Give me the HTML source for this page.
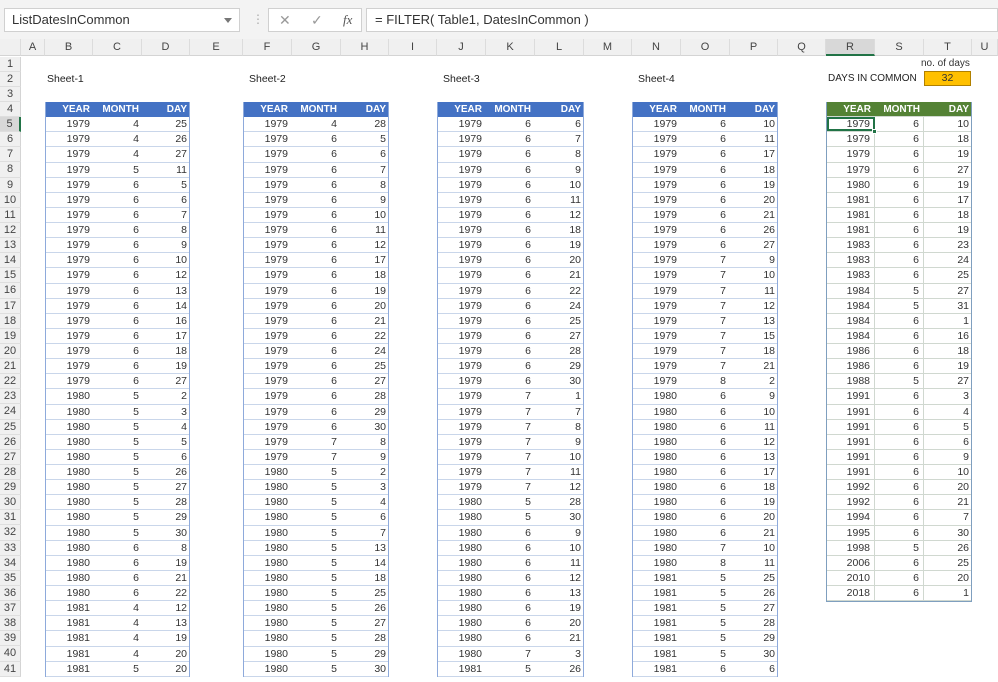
<!DOCTYPE html>
<html><head><meta charset="utf-8"><style>
*{box-sizing:border-box;margin:0;padding:0}
body{width:998px;height:682px;overflow:hidden;background:#fff;font-family:"Liberation Sans",sans-serif;font-size:10.5px;color:#333;position:relative}
.top{position:absolute;left:0;top:0;width:998px;height:39px;background:#f3f3f3}
.nb{position:absolute;left:4px;top:8px;width:236px;height:24px;background:#fff;border:1px solid #d0d0d0;font-size:13px;line-height:22px;padding-left:7px;color:#333}
.nb:after{content:"";position:absolute;right:7px;top:9px;border:4px solid transparent;border-top:5px solid #777}
.fb{position:absolute;left:268px;top:8px;width:94px;height:24px;background:#fff;border:1px solid #d0d0d0;color:#999;font-size:14px;line-height:22px}
.fx{position:absolute;left:366px;top:8px;width:632px;height:24px;background:#fff;border:1px solid #d0d0d0;font-size:13px;line-height:22px;padding-left:8px;color:#333}
.ch{position:absolute;top:39px;height:17px;background:#f0f0f0;border-bottom:1px solid #d4d4d4;border-right:1px solid #dcdcdc;text-align:center;font-size:11px;line-height:16px;color:#444}
.rh{position:relative;width:21px;height:15.13px;background:#f0f0f0;border-bottom:1px solid #dedede;border-right:1px solid #d4d4d4;text-align:center;font-size:11px;line-height:15px;color:#444}
.lbl{position:absolute;font-size:10.5px;color:#222}
.t{position:absolute;border-left:1px solid #8eaadb;border-right:1px solid #8eaadb}
.t .r{display:flex;height:15.13px;line-height:15px;border-bottom:1px solid #c9d6ea}
.t .r span{display:block;text-align:right;padding-right:4px}
.t .r span:nth-child(1){width:48px}
.t .r span:nth-child(2){width:49px}
.t .r span:nth-child(3){flex:1;padding-right:2px}
.t .h{background:#4472c4;color:#fff;font-weight:bold;border-bottom:none;font-size:10px}
.g{border-left:1px solid #7f9fbf;border-right:1px solid #7f9fbf;border-bottom:1px solid #7f9fbf}
.g .r{border-bottom:1px solid #d0d8d0}
.g .r span:nth-child(1),.g .r span:nth-child(2){border-right:1px solid #d0d8d0}
.g .h{background:#548235}
.g .h span{border-right:none!important}
</style></head><body>
<div class="top">
<div class="nb">ListDatesInCommon</div>
<div style="position:absolute;left:252px;top:12px;color:#aaa;font-size:12px">⋮</div>
<div class="fb"><span style="position:absolute;left:10px">✕</span><span style="position:absolute;left:42px">✓</span><span style="position:absolute;left:74px;font-family:'Liberation Serif',serif;font-style:italic;color:#555;font-size:13px">fx</span></div>
<div class="fx">= FILTER( Table1, DatesInCommon )</div>
</div>
<div class="ch" style="left:0;width:21px"></div>
<div class="ch" style="left:21px;width:24px">A</div>
<div class="ch" style="left:45px;width:48px">B</div>
<div class="ch" style="left:93px;width:49px">C</div>
<div class="ch" style="left:142px;width:48px">D</div>
<div class="ch" style="left:190px;width:53px">E</div>
<div class="ch" style="left:243px;width:49px">F</div>
<div class="ch" style="left:292px;width:49px">G</div>
<div class="ch" style="left:341px;width:48px">H</div>
<div class="ch" style="left:389px;width:48px">I</div>
<div class="ch" style="left:437px;width:49px">J</div>
<div class="ch" style="left:486px;width:49px">K</div>
<div class="ch" style="left:535px;width:49px">L</div>
<div class="ch" style="left:584px;width:48px">M</div>
<div class="ch" style="left:632px;width:49px">N</div>
<div class="ch" style="left:681px;width:49px">O</div>
<div class="ch" style="left:730px;width:48px">P</div>
<div class="ch" style="left:778px;width:48px">Q</div>
<div class="ch" style="left:826px;width:49px;background:#d8d8d8;border-bottom:2px solid #217346">R</div>
<div class="ch" style="left:875px;width:49px">S</div>
<div class="ch" style="left:924px;width:48px">T</div>
<div class="ch" style="left:972px;width:26px">U</div>

<div style="position:absolute;left:0;top:56.6px">
<div class="rh">1</div><div class="rh">2</div><div class="rh">3</div><div class="rh">4</div><div class="rh" style="background:#d8d8d8;border-right:2px solid #217346">5</div><div class="rh">6</div><div class="rh">7</div><div class="rh">8</div><div class="rh">9</div><div class="rh">10</div><div class="rh">11</div><div class="rh">12</div><div class="rh">13</div><div class="rh">14</div><div class="rh">15</div><div class="rh">16</div><div class="rh">17</div><div class="rh">18</div><div class="rh">19</div><div class="rh">20</div><div class="rh">21</div><div class="rh">22</div><div class="rh">23</div><div class="rh">24</div><div class="rh">25</div><div class="rh">26</div><div class="rh">27</div><div class="rh">28</div><div class="rh">29</div><div class="rh">30</div><div class="rh">31</div><div class="rh">32</div><div class="rh">33</div><div class="rh">34</div><div class="rh">35</div><div class="rh">36</div><div class="rh">37</div><div class="rh">38</div><div class="rh">39</div><div class="rh">40</div><div class="rh">41</div>
</div>

<div class="lbl" style="left:47px;top:73px">Sheet-1</div>
<div class="lbl" style="left:249px;top:73px">Sheet-2</div>
<div class="lbl" style="left:443px;top:73px">Sheet-3</div>
<div class="lbl" style="left:638px;top:73px">Sheet-4</div>
<div class="lbl" style="left:828px;top:73px;font-size:10px">DAYS IN COMMON</div>
<div class="lbl" style="left:921px;top:58px;font-size:10px;color:#333">no. of days</div>
<div style="position:absolute;left:924px;top:71px;width:47px;height:15px;background:#ffc000;border:1px solid #b08000;text-align:center;line-height:13px">32</div>

<div class="t" style="left:45px;top:102px;width:145px">
<div class="r h"><span>YEAR</span><span>MONTH</span><span>DAY</span></div>
<div class="r"><span>1979</span><span>4</span><span>25</span></div>
<div class="r"><span>1979</span><span>4</span><span>26</span></div>
<div class="r"><span>1979</span><span>4</span><span>27</span></div>
<div class="r"><span>1979</span><span>5</span><span>11</span></div>
<div class="r"><span>1979</span><span>6</span><span>5</span></div>
<div class="r"><span>1979</span><span>6</span><span>6</span></div>
<div class="r"><span>1979</span><span>6</span><span>7</span></div>
<div class="r"><span>1979</span><span>6</span><span>8</span></div>
<div class="r"><span>1979</span><span>6</span><span>9</span></div>
<div class="r"><span>1979</span><span>6</span><span>10</span></div>
<div class="r"><span>1979</span><span>6</span><span>12</span></div>
<div class="r"><span>1979</span><span>6</span><span>13</span></div>
<div class="r"><span>1979</span><span>6</span><span>14</span></div>
<div class="r"><span>1979</span><span>6</span><span>16</span></div>
<div class="r"><span>1979</span><span>6</span><span>17</span></div>
<div class="r"><span>1979</span><span>6</span><span>18</span></div>
<div class="r"><span>1979</span><span>6</span><span>19</span></div>
<div class="r"><span>1979</span><span>6</span><span>27</span></div>
<div class="r"><span>1980</span><span>5</span><span>2</span></div>
<div class="r"><span>1980</span><span>5</span><span>3</span></div>
<div class="r"><span>1980</span><span>5</span><span>4</span></div>
<div class="r"><span>1980</span><span>5</span><span>5</span></div>
<div class="r"><span>1980</span><span>5</span><span>6</span></div>
<div class="r"><span>1980</span><span>5</span><span>26</span></div>
<div class="r"><span>1980</span><span>5</span><span>27</span></div>
<div class="r"><span>1980</span><span>5</span><span>28</span></div>
<div class="r"><span>1980</span><span>5</span><span>29</span></div>
<div class="r"><span>1980</span><span>5</span><span>30</span></div>
<div class="r"><span>1980</span><span>6</span><span>8</span></div>
<div class="r"><span>1980</span><span>6</span><span>19</span></div>
<div class="r"><span>1980</span><span>6</span><span>21</span></div>
<div class="r"><span>1980</span><span>6</span><span>22</span></div>
<div class="r"><span>1981</span><span>4</span><span>12</span></div>
<div class="r"><span>1981</span><span>4</span><span>13</span></div>
<div class="r"><span>1981</span><span>4</span><span>19</span></div>
<div class="r"><span>1981</span><span>4</span><span>20</span></div>
<div class="r"><span>1981</span><span>5</span><span>20</span></div>
</div>

<div class="t" style="left:243px;top:102px;width:146px">
<div class="r h"><span>YEAR</span><span>MONTH</span><span>DAY</span></div>
<div class="r"><span>1979</span><span>4</span><span>28</span></div>
<div class="r"><span>1979</span><span>6</span><span>5</span></div>
<div class="r"><span>1979</span><span>6</span><span>6</span></div>
<div class="r"><span>1979</span><span>6</span><span>7</span></div>
<div class="r"><span>1979</span><span>6</span><span>8</span></div>
<div class="r"><span>1979</span><span>6</span><span>9</span></div>
<div class="r"><span>1979</span><span>6</span><span>10</span></div>
<div class="r"><span>1979</span><span>6</span><span>11</span></div>
<div class="r"><span>1979</span><span>6</span><span>12</span></div>
<div class="r"><span>1979</span><span>6</span><span>17</span></div>
<div class="r"><span>1979</span><span>6</span><span>18</span></div>
<div class="r"><span>1979</span><span>6</span><span>19</span></div>
<div class="r"><span>1979</span><span>6</span><span>20</span></div>
<div class="r"><span>1979</span><span>6</span><span>21</span></div>
<div class="r"><span>1979</span><span>6</span><span>22</span></div>
<div class="r"><span>1979</span><span>6</span><span>24</span></div>
<div class="r"><span>1979</span><span>6</span><span>25</span></div>
<div class="r"><span>1979</span><span>6</span><span>27</span></div>
<div class="r"><span>1979</span><span>6</span><span>28</span></div>
<div class="r"><span>1979</span><span>6</span><span>29</span></div>
<div class="r"><span>1979</span><span>6</span><span>30</span></div>
<div class="r"><span>1979</span><span>7</span><span>8</span></div>
<div class="r"><span>1979</span><span>7</span><span>9</span></div>
<div class="r"><span>1980</span><span>5</span><span>2</span></div>
<div class="r"><span>1980</span><span>5</span><span>3</span></div>
<div class="r"><span>1980</span><span>5</span><span>4</span></div>
<div class="r"><span>1980</span><span>5</span><span>6</span></div>
<div class="r"><span>1980</span><span>5</span><span>7</span></div>
<div class="r"><span>1980</span><span>5</span><span>13</span></div>
<div class="r"><span>1980</span><span>5</span><span>14</span></div>
<div class="r"><span>1980</span><span>5</span><span>18</span></div>
<div class="r"><span>1980</span><span>5</span><span>25</span></div>
<div class="r"><span>1980</span><span>5</span><span>26</span></div>
<div class="r"><span>1980</span><span>5</span><span>27</span></div>
<div class="r"><span>1980</span><span>5</span><span>28</span></div>
<div class="r"><span>1980</span><span>5</span><span>29</span></div>
<div class="r"><span>1980</span><span>5</span><span>30</span></div>
</div>

<div class="t" style="left:437px;top:102px;width:147px">
<div class="r h"><span>YEAR</span><span>MONTH</span><span>DAY</span></div>
<div class="r"><span>1979</span><span>6</span><span>6</span></div>
<div class="r"><span>1979</span><span>6</span><span>7</span></div>
<div class="r"><span>1979</span><span>6</span><span>8</span></div>
<div class="r"><span>1979</span><span>6</span><span>9</span></div>
<div class="r"><span>1979</span><span>6</span><span>10</span></div>
<div class="r"><span>1979</span><span>6</span><span>11</span></div>
<div class="r"><span>1979</span><span>6</span><span>12</span></div>
<div class="r"><span>1979</span><span>6</span><span>18</span></div>
<div class="r"><span>1979</span><span>6</span><span>19</span></div>
<div class="r"><span>1979</span><span>6</span><span>20</span></div>
<div class="r"><span>1979</span><span>6</span><span>21</span></div>
<div class="r"><span>1979</span><span>6</span><span>22</span></div>
<div class="r"><span>1979</span><span>6</span><span>24</span></div>
<div class="r"><span>1979</span><span>6</span><span>25</span></div>
<div class="r"><span>1979</span><span>6</span><span>27</span></div>
<div class="r"><span>1979</span><span>6</span><span>28</span></div>
<div class="r"><span>1979</span><span>6</span><span>29</span></div>
<div class="r"><span>1979</span><span>6</span><span>30</span></div>
<div class="r"><span>1979</span><span>7</span><span>1</span></div>
<div class="r"><span>1979</span><span>7</span><span>7</span></div>
<div class="r"><span>1979</span><span>7</span><span>8</span></div>
<div class="r"><span>1979</span><span>7</span><span>9</span></div>
<div class="r"><span>1979</span><span>7</span><span>10</span></div>
<div class="r"><span>1979</span><span>7</span><span>11</span></div>
<div class="r"><span>1979</span><span>7</span><span>12</span></div>
<div class="r"><span>1980</span><span>5</span><span>28</span></div>
<div class="r"><span>1980</span><span>5</span><span>30</span></div>
<div class="r"><span>1980</span><span>6</span><span>9</span></div>
<div class="r"><span>1980</span><span>6</span><span>10</span></div>
<div class="r"><span>1980</span><span>6</span><span>11</span></div>
<div class="r"><span>1980</span><span>6</span><span>12</span></div>
<div class="r"><span>1980</span><span>6</span><span>13</span></div>
<div class="r"><span>1980</span><span>6</span><span>19</span></div>
<div class="r"><span>1980</span><span>6</span><span>20</span></div>
<div class="r"><span>1980</span><span>6</span><span>21</span></div>
<div class="r"><span>1980</span><span>7</span><span>3</span></div>
<div class="r"><span>1981</span><span>5</span><span>26</span></div>
</div>

<div class="t" style="left:632px;top:102px;width:146px">
<div class="r h"><span>YEAR</span><span>MONTH</span><span>DAY</span></div>
<div class="r"><span>1979</span><span>6</span><span>10</span></div>
<div class="r"><span>1979</span><span>6</span><span>11</span></div>
<div class="r"><span>1979</span><span>6</span><span>17</span></div>
<div class="r"><span>1979</span><span>6</span><span>18</span></div>
<div class="r"><span>1979</span><span>6</span><span>19</span></div>
<div class="r"><span>1979</span><span>6</span><span>20</span></div>
<div class="r"><span>1979</span><span>6</span><span>21</span></div>
<div class="r"><span>1979</span><span>6</span><span>26</span></div>
<div class="r"><span>1979</span><span>6</span><span>27</span></div>
<div class="r"><span>1979</span><span>7</span><span>9</span></div>
<div class="r"><span>1979</span><span>7</span><span>10</span></div>
<div class="r"><span>1979</span><span>7</span><span>11</span></div>
<div class="r"><span>1979</span><span>7</span><span>12</span></div>
<div class="r"><span>1979</span><span>7</span><span>13</span></div>
<div class="r"><span>1979</span><span>7</span><span>15</span></div>
<div class="r"><span>1979</span><span>7</span><span>18</span></div>
<div class="r"><span>1979</span><span>7</span><span>21</span></div>
<div class="r"><span>1979</span><span>8</span><span>2</span></div>
<div class="r"><span>1980</span><span>6</span><span>9</span></div>
<div class="r"><span>1980</span><span>6</span><span>10</span></div>
<div class="r"><span>1980</span><span>6</span><span>11</span></div>
<div class="r"><span>1980</span><span>6</span><span>12</span></div>
<div class="r"><span>1980</span><span>6</span><span>13</span></div>
<div class="r"><span>1980</span><span>6</span><span>17</span></div>
<div class="r"><span>1980</span><span>6</span><span>18</span></div>
<div class="r"><span>1980</span><span>6</span><span>19</span></div>
<div class="r"><span>1980</span><span>6</span><span>20</span></div>
<div class="r"><span>1980</span><span>6</span><span>21</span></div>
<div class="r"><span>1980</span><span>7</span><span>10</span></div>
<div class="r"><span>1980</span><span>8</span><span>11</span></div>
<div class="r"><span>1981</span><span>5</span><span>25</span></div>
<div class="r"><span>1981</span><span>5</span><span>26</span></div>
<div class="r"><span>1981</span><span>5</span><span>27</span></div>
<div class="r"><span>1981</span><span>5</span><span>28</span></div>
<div class="r"><span>1981</span><span>5</span><span>29</span></div>
<div class="r"><span>1981</span><span>5</span><span>30</span></div>
<div class="r"><span>1981</span><span>6</span><span>6</span></div>
</div>

<div class="t g" style="left:826px;top:102px;width:146px">
<div class="r h"><span>YEAR</span><span>MONTH</span><span>DAY</span></div>
<div class="r" style="position:relative"><span style="outline:2px solid #217346;outline-offset:-2px">1979</span><span>6</span><span>10</span><i style="position:absolute;left:45px;top:12px;width:5px;height:5px;background:#217346;border:1px solid #fff"></i></div>
<div class="r"><span>1979</span><span>6</span><span>18</span></div>
<div class="r"><span>1979</span><span>6</span><span>19</span></div>
<div class="r"><span>1979</span><span>6</span><span>27</span></div>
<div class="r"><span>1980</span><span>6</span><span>19</span></div>
<div class="r"><span>1981</span><span>6</span><span>17</span></div>
<div class="r"><span>1981</span><span>6</span><span>18</span></div>
<div class="r"><span>1981</span><span>6</span><span>19</span></div>
<div class="r"><span>1983</span><span>6</span><span>23</span></div>
<div class="r"><span>1983</span><span>6</span><span>24</span></div>
<div class="r"><span>1983</span><span>6</span><span>25</span></div>
<div class="r"><span>1984</span><span>5</span><span>27</span></div>
<div class="r"><span>1984</span><span>5</span><span>31</span></div>
<div class="r"><span>1984</span><span>6</span><span>1</span></div>
<div class="r"><span>1984</span><span>6</span><span>16</span></div>
<div class="r"><span>1986</span><span>6</span><span>18</span></div>
<div class="r"><span>1986</span><span>6</span><span>19</span></div>
<div class="r"><span>1988</span><span>5</span><span>27</span></div>
<div class="r"><span>1991</span><span>6</span><span>3</span></div>
<div class="r"><span>1991</span><span>6</span><span>4</span></div>
<div class="r"><span>1991</span><span>6</span><span>5</span></div>
<div class="r"><span>1991</span><span>6</span><span>6</span></div>
<div class="r"><span>1991</span><span>6</span><span>9</span></div>
<div class="r"><span>1991</span><span>6</span><span>10</span></div>
<div class="r"><span>1992</span><span>6</span><span>20</span></div>
<div class="r"><span>1992</span><span>6</span><span>21</span></div>
<div class="r"><span>1994</span><span>6</span><span>7</span></div>
<div class="r"><span>1995</span><span>6</span><span>30</span></div>
<div class="r"><span>1998</span><span>5</span><span>26</span></div>
<div class="r"><span>2006</span><span>6</span><span>25</span></div>
<div class="r"><span>2010</span><span>6</span><span>20</span></div>
<div class="r"><span>2018</span><span>6</span><span>1</span></div>
</div>
</body></html>
